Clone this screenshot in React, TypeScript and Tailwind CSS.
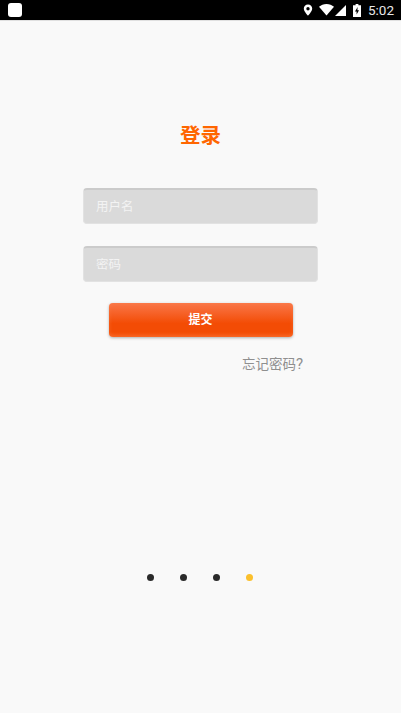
import React from 'react';

function StatusBar() {
  return (
    <div className="h-5 bg-black flex items-center justify-between pl-2 pr-[7px] border-b border-[#e0e0e0] box-content -mb-px">
      <div className="w-[14px] h-[14px] rounded-[3px] bg-white" />
      <div className="flex items-center">
        {/* location pin */}
        <svg width="10" height="12" viewBox="0 0 10 12" className="mr-[6px]">
          <path fillRule="evenodd" fill="#fff" d="M5 .5C2.5.5.8 2.4.8 4.6.8 7.6 5 11.8 5 11.8S9.2 7.6 9.2 4.6C9.2 2.4 7.5.5 5 .5ZM5 3a1.7 1.7 0 1 1 0 3.4A1.7 1.7 0 0 1 5 3Z" />
        </svg>
        {/* wifi */}
        <svg width="15" height="12" viewBox="0 0 15 12" className="mr-[1px]">
          <path fill="#fff" d="M0 2.8C2 1.1 4.6 0 7.5 0S13 1.1 15 2.8L7.5 11.5Z" />
        </svg>
        {/* cell signal */}
        <svg width="11" height="11" viewBox="0 0 11 11" className="mr-[7px]">
          <path fill="#fff" d="M0 11 11 0v11Z" />
        </svg>
        {/* battery charging */}
        <svg width="8" height="13" viewBox="0 0 8 13" className="mr-[7px]">
          <path fillRule="evenodd" fill="#fff" d="M2.6 0h2.8v1.2H8V13H0V1.2h2.6ZM4.6 3 2 7.4h1.6v3L6 6.2H4.4Z" />
        </svg>
        <span className="text-[13.5px] leading-5 text-[#e8e8e8] font-['Roboto',sans-serif]">5:02</span>
      </div>
    </div>
  );
}

function Field({ label }: { label: string }) {
  return (
    <div className="h-[36px] rounded-[4px] bg-[#dadada] border border-[#e2e2e2] border-t-[#cbcbcb] border-t-2 flex items-center pl-3 pt-px text-[12.5px] text-[#f3f3f3]">
      {label}
    </div>
  );
}

export default function App() {
  return (
    <div className="h-[713px] bg-[#f9f9f9] flex flex-col" style={{ fontFamily: 'Roboto, "Noto Sans CJK SC", sans-serif' }}>
      <StatusBar />

      <h1 className="mt-[102px] text-center text-[20.5px] leading-7 font-bold text-[#ff6600]">登录</h1>

      <div className="mt-[38px] mx-[83px] flex flex-col gap-[22px]">
        <Field label="用户名" />
        <Field label="密码" />
      </div>

      <button className="mt-[21px] mx-[108.5px] h-[34px] rounded-[4px] text-white text-[12px] font-bold shadow-[0_1px_3px_rgba(0,0,0,0.3),inset_0_0_4px_rgba(255,130,70,0.5)] bg-[linear-gradient(#f9774a,#f34c05_60%,#f34c05_85%,#f75f1c)]">
        提交
      </button>

      <div className="mt-[17px] pr-[98px] text-right text-[13.5px] leading-5 text-[#8f8f8f]">
        忘记密码<span className="text-[15px]">?</span>
      </div>

      <div className="mt-[200px] flex justify-center gap-[26px] pr-px">
        <span className="w-[7px] h-[7px] rounded-full bg-[#2a2a2a]" />
        <span className="w-[7px] h-[7px] rounded-full bg-[#2a2a2a]" />
        <span className="w-[7px] h-[7px] rounded-full bg-[#2a2a2a]" />
        <span className="w-[7px] h-[7px] rounded-full bg-[#fbc02d]" />
      </div>
    </div>
  );
}
